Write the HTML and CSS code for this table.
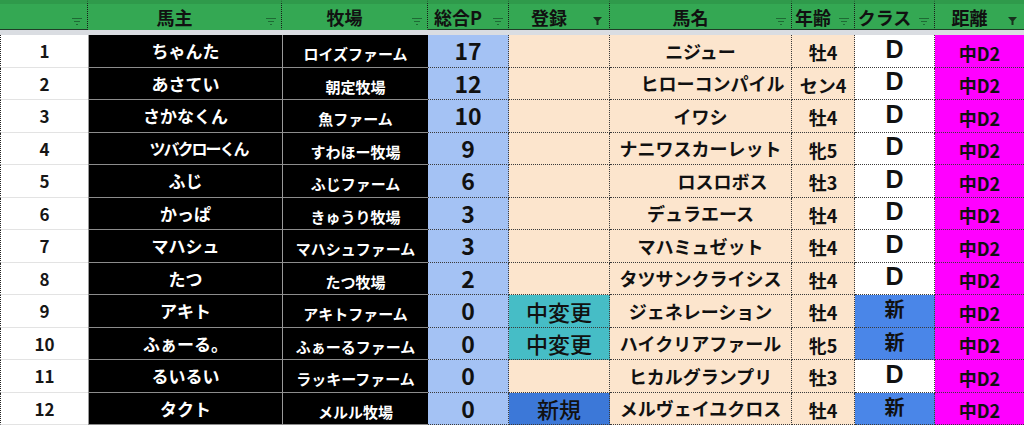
FILE: index.html
```html
<!DOCTYPE html>
<html lang="ja">
<head>
<meta charset="utf-8">
<title>馬主一覧</title>
<link rel="stylesheet" href="styles.css">
</head>
<body>
<div class="sheet">
  <div class="h c0"><span></span><svg class="ic" viewBox="0 0 10 7"><path d="M0 .5h10M2 3.5h6M4 6.5h2"/></svg></div>
  <div class="h c1"><span>馬主</span><svg class="ic" viewBox="0 0 10 7"><path d="M0 .5h10M2 3.5h6M4 6.5h2"/></svg></div>
  <div class="h c2"><span>牧場</span><svg class="ic" viewBox="0 0 10 7"><path d="M0 .5h10M2 3.5h6M4 6.5h2"/></svg></div>
  <div class="h c3"><span>総合P</span><svg class="ic" viewBox="0 0 10 7"><path d="M0 .5h10M2 3.5h6M4 6.5h2"/></svg></div>
  <div class="h c4"><span>登録</span><svg class="ic fil" viewBox="0 0 9 8"><path d="M0 0h9L5.5 4v4h-2V4z"/></svg></div>
  <div class="h c5"><span>馬名</span><svg class="ic" viewBox="0 0 10 7"><path d="M0 .5h10M2 3.5h6M4 6.5h2"/></svg></div>
  <div class="h c6"><span>年齢</span><svg class="ic" viewBox="0 0 10 7"><path d="M0 .5h10M2 3.5h6M4 6.5h2"/></svg></div>
  <div class="h c7"><span>クラス</span><svg class="ic" viewBox="0 0 10 7"><path d="M0 .5h10M2 3.5h6M4 6.5h2"/></svg></div>
  <div class="h c8"><span>距離</span><svg class="ic fil" viewBox="0 0 9 8"><path d="M0 0h9L5.5 4v4h-2V4z"/></svg></div>

  <div class="band"></div>

  <div class="rows">
    <div class="d num">1</div><div class="d own">ちゃんた</div><div class="d farm">ロイズファーム</div><div class="d pt">17</div><div class="d reg"></div><div class="d hn">ニジュー</div><div class="d age">牡4</div><div class="d cls">D</div><div class="d dist">中D2</div>
    <div class="d num">2</div><div class="d own">あさてい</div><div class="d farm">朝定牧場</div><div class="d pt">12</div><div class="d reg"></div><div class="d hn sh1">ヒローコンパイル</div><div class="d age">セン4</div><div class="d cls">D</div><div class="d dist">中D2</div>
    <div class="d num">3</div><div class="d own">さかなくん</div><div class="d farm">魚ファーム</div><div class="d pt">10</div><div class="d reg"></div><div class="d hn">イワシ</div><div class="d age">牡4</div><div class="d cls">D</div><div class="d dist">中D2</div>
    <div class="d num">4</div><div class="d own tight">ツバクローくん</div><div class="d farm">すわほー牧場</div><div class="d pt">9</div><div class="d reg"></div><div class="d hn">ナニワスカーレット</div><div class="d age">牝5</div><div class="d cls">D</div><div class="d dist">中D2</div>
    <div class="d num">5</div><div class="d own">ふじ</div><div class="d farm">ふじファーム</div><div class="d pt">6</div><div class="d reg"></div><div class="d hn sh2">ロスロボス</div><div class="d age">牡3</div><div class="d cls">D</div><div class="d dist">中D2</div>
    <div class="d num">6</div><div class="d own">かっぱ</div><div class="d farm">きゅうり牧場</div><div class="d pt">3</div><div class="d reg"></div><div class="d hn">デュラエース</div><div class="d age">牡4</div><div class="d cls">D</div><div class="d dist">中D2</div>
    <div class="d num">7</div><div class="d own">マハシュ</div><div class="d farm">マハシュファーム</div><div class="d pt">3</div><div class="d reg"></div><div class="d hn">マハミュゼット</div><div class="d age">牡4</div><div class="d cls">D</div><div class="d dist">中D2</div>
    <div class="d num">8</div><div class="d own">たつ</div><div class="d farm">たつ牧場</div><div class="d pt">2</div><div class="d reg"></div><div class="d hn">タツサンクライシス</div><div class="d age">牡4</div><div class="d cls">D</div><div class="d dist">中D2</div>
    <div class="d num">9</div><div class="d own">アキト</div><div class="d farm">アキトファーム</div><div class="d pt">0</div><div class="d reg chg">中変更</div><div class="d hn">ジェネレーション</div><div class="d age">牡4</div><div class="d cls new">新</div><div class="d dist">中D2</div>
    <div class="d num">10</div><div class="d own">ふぁーる。</div><div class="d farm">ふぁーるファーム</div><div class="d pt">0</div><div class="d reg chg">中変更</div><div class="d hn">ハイクリアファール</div><div class="d age">牝5</div><div class="d cls new">新</div><div class="d dist">中D2</div>
    <div class="d num">11</div><div class="d own">るいるい</div><div class="d farm">ラッキーファーム</div><div class="d pt">0</div><div class="d reg"></div><div class="d hn">ヒカルグランプリ</div><div class="d age">牡3</div><div class="d cls">D</div><div class="d dist">中D2</div>
    <div class="d num">12</div><div class="d own">タクト</div><div class="d farm">メルル牧場</div><div class="d pt">0</div><div class="d reg nw">新規</div><div class="d hn">メルヴェイユクロス</div><div class="d age">牡4</div><div class="d cls new">新</div><div class="d dist">中D2</div>
  </div>
</div>
</body>
</html>
```

FILE: styles.css
```css
html, body {
  margin: 0;
  padding: 0;
  background: #ffffff;
  overflow: hidden;
}

body {
  font-family: "Noto Sans CJK JP", "Noto Sans", sans-serif;
  font-weight: 700;
  color: #111111;
}

.sheet {
  width: 1024px;
  height: 425px;
  display: grid;
  grid-template-columns: 88px 194px 146px 81px 101px 182px 63px 80px 89px;
  grid-template-rows: 30px 5px 390px;
}

/* header */
.h {
  position: relative;
  box-sizing: border-box;
  background: #34a853;
  border-top: 4px solid #2f9a4b;
  border-bottom: 1px solid #1f3d27;
  border-right: 1px dotted #1a1a1a;
  display: flex;
  align-items: center;
  justify-content: center;
  padding-right: 20px;
  font-size: 18px;
  line-height: 1;
  color: #111;
}
.h span { display: block; }
.h.c1, .h.c2 { border-bottom-color: #34a853; }
.h.c8 { border-right: none; }

.ic {
  position: absolute;
  right: 5px;
  bottom: 4px;
  width: 10px;
  height: 7px;
  fill: none;
  stroke: #1e6a34;
  stroke-width: 1;
}
.ic.fil {
  width: 9px;
  height: 8px;
  right: 7px;
  bottom: 4px;
  stroke: none;
  fill: #17301d;
}

.band {
  grid-column: 1 / -1;
  background: #dadde2;
}

.rows {
  grid-column: 1 / -1;
  display: grid;
  grid-template-columns: 88px 194px 146px 81px 101px 182px 63px 80px 89px;
  grid-template-rows: repeat(12, 1fr);
}

.d {
  box-sizing: border-box;
  display: flex;
  align-items: center;
  justify-content: center;
  line-height: 1;
  white-space: nowrap;
  overflow: visible;
}

.num {
  background: #ffffff;
  border-left: 1px dotted #222;
  border-bottom: 1px solid #e3e3e3;
  font-size: 17px;
  color: #161616;
}

.own {
  background: #000000;
  color: #ffffff;
  font-size: 17px;
  border-left: 1px solid #9a9a9a;
  border-bottom: 1px solid #8c8c8c;
}
.own.tight {
  font-size: 16px;
  letter-spacing: -2px;
  padding-left: 26px;
}

.farm {
  background: #000000;
  color: #ffffff;
  font-size: 15px;
  border-left: 1px solid #9a9a9a;
  border-bottom: 1px solid #8c8c8c;
  padding-top: 6px;
}

.pt {
  background: #a4c2f4;
  font-size: 23px;
  border-bottom: 1px dotted #3a3a3a;
  border-right: 1px dotted #3a3a3a;
}

.reg {
  background: #fce5cd;
  font-size: 22px;
  font-weight: 500;
  border-bottom: 1px dotted #3a3a3a;
  border-right: 1px dotted #3a3a3a;
}
.reg.chg { background: #46bdc6; }
.reg.nw { background: #3c78d8; }

.hn {
  background: #fce5cd;
  font-size: 18px;
  border-bottom: 1px dotted #3a3a3a;
  border-right: 1px dotted #3a3a3a;
  position: relative;
  z-index: 1;
}
.hn.sh1 { padding-left: 24px; }
.hn.sh2 { padding-left: 44px; }

.age {
  background: #fce5cd;
  font-size: 18px;
  border-bottom: 1px dotted #3a3a3a;
  border-right: 1px dotted #3a3a3a;
  padding-top: 3px;
}

.cls {
  background: #ffffff;
  font-size: 25px;
  font-family: "Liberation Sans", "Noto Sans CJK JP", sans-serif;
  border-bottom: 1px dotted #3a3a3a;
  border-right: 1px dotted #3a3a3a;
  padding-bottom: 3px;
}
.cls.new {
  background: #4a86e8;
  font-family: "Noto Sans CJK JP", sans-serif;
  font-size: 20px;
}

.dist {
  background: #ff00ff;
  font-size: 18px;
  border-bottom: 1px dotted #3a3a3a;
  padding-top: 4px;
}
```
